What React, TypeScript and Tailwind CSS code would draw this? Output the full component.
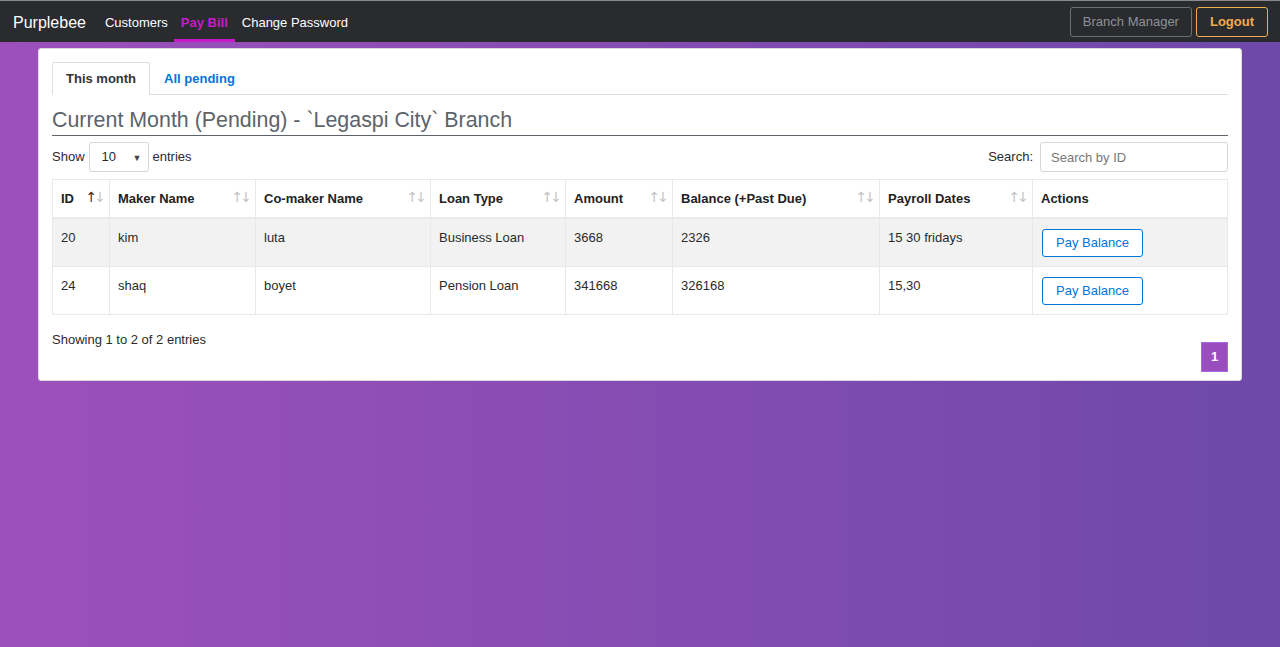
import { useState } from 'react'

const rows = [
    { id: '20', maker: 'kim', comaker: 'luta', type: 'Business Loan', amount: '3668', balance: '2326', payroll: '15 30 fridays' },
    { id: '24', maker: 'shaq', comaker: 'boyet', type: 'Pension Loan', amount: '341668', balance: '326168', payroll: '15,30' },
]

const columns = [
    { label: 'ID', width: 'w-[57px]', sort: true, active: true },
    { label: 'Maker Name', width: 'w-[146px]', sort: true },
    { label: 'Co-maker Name', width: 'w-[175px]', sort: true },
    { label: 'Loan Type', width: 'w-[135px]', sort: true },
    { label: 'Amount', width: 'w-[107px]', sort: true },
    { label: 'Balance (+Past Due)', width: 'w-[207px]', sort: true },
    { label: 'Payroll Dates', width: 'w-[153px]', sort: true },
    { label: 'Actions', width: '', sort: false },
]

const SortIcon = ({ active }: { active?: boolean }) => (
    <span className="absolute right-[6px] top-[10px] flex font-['DejaVu_Sans',sans-serif] font-normal text-[14px] leading-none tracking-[-3px]">
        <span className={active ? 'text-[#333]' : 'text-[#c4c4c4]'}>↑</span>
        <span className="text-[#c4c4c4]">↓</span>
    </span>
)

export default function App() {
    const [tab, setTab] = useState('month')

    return (
        <div className="min-h-[647px] bg-gradient-to-r from-[#9d50bb] to-[#6e48aa] font-['Liberation_Sans',Arial,sans-serif] text-[13px] text-[#292b2c]">
            {/* Navbar */}
            <nav className="h-[42px] bg-[#292b2e] border-t border-[#8a8a8a] flex items-center pl-[13px] pr-[12px]">
                <span className="text-[16px] text-white mr-[13px] pt-[2px]">Purplebee</span>
                <div className="flex h-full items-stretch">
                    <a className="px-[6px] pt-[3px] flex items-center text-white">Customers</a>
                    <a className="px-[7px] pt-[6px] flex items-center text-[#c81ac9] font-bold border-b-[3px] border-[#c81ac9]">Pay Bill</a>
                    <a className="px-[7px] pt-[3px] flex items-center text-white">Change Password</a>
                </div>
                <div className="ml-auto flex gap-[4px]">
                    <button className="h-[30px] px-[12px] border border-[#6c6f73] rounded-[3px] text-[#8e9196] text-[13px]">Branch Manager</button>
                    <button className="h-[30px] px-[13px] border border-[#f0ad4e] rounded-[3px] text-[#f0ad4e] text-[13px] font-bold">Logout</button>
                </div>
            </nav>

            <div className="px-[38px] pt-[6px]">
                <div className="bg-white rounded-[3px] border border-[#dcdcdc] px-[13px] pt-[13px] pb-[8px]">
                    {/* Tabs */}
                    <div className="flex border-b border-[#ddd] h-[33px]">
                        <button
                            onClick={() => setTab('month')}
                            className={`px-[13px] -mb-px font-bold rounded-t-[3px] ${tab === 'month' ? 'border border-[#ddd] border-b-white bg-white text-[#333]' : 'text-[#0275d8]'}`}
                        >
                            This month
                        </button>
                        <button
                            onClick={() => setTab('all')}
                            className={`px-[14px] -mb-px font-bold rounded-t-[3px] ${tab === 'all' ? 'border border-[#ddd] border-b-white bg-white text-[#333]' : 'text-[#0275d8]'}`}
                        >
                            All pending
                        </button>
                    </div>

                    <h3 className="text-[21.4px] leading-[26px] text-[#5c636b] mt-[12px] pb-[2px] border-b border-[#5c636b]">
                        Current Month (Pending) - `Legaspi City` Branch
                    </h3>

                    {/* Controls */}
                    <div className="flex items-center justify-between mt-[6px]">
                        <div className="flex items-center gap-[4px]">
                            <span>Show</span>
                            <div className="relative w-[60px] h-[30px] border border-[#d6d6d6] rounded-[3px] flex items-center pl-[12px]">
                                10
                                <span className="absolute right-[6px] top-[9px] text-[9px] text-[#444]">▼</span>
                            </div>
                            <span>entries</span>
                        </div>
                        <div className="flex items-center gap-[7px]">
                            <span>Search:</span>
                            <input
                                placeholder="Search by ID"
                                className="w-[188px] h-[30px] border border-[#d6d6d6] rounded-[3px] px-[10px] text-[13px] placeholder:text-[#777] outline-none"
                            />
                        </div>
                    </div>

                    {/* Table */}
                    <table className="w-full mt-[7px] border-collapse border border-[#e9e9e9] table-fixed">
                        <thead>
                            <tr className="h-[38px] border-b-2 border-[#e9e9e9]">
                                {columns.map((c) => (
                                    <th key={c.label} className={`${c.width} relative border-r border-[#e9e9e9] text-left font-bold px-[8px] text-[#222]`}>
                                        {c.label}
                                        {c.sort && <SortIcon active={c.active} />}
                                    </th>
                                ))}
                            </tr>
                        </thead>
                        <tbody>
                            {rows.map((r, i) => (
                                <tr key={r.id} className={`${i === 0 ? 'bg-[#f2f2f2] h-[49px]' : 'bg-white h-[48px]'} border-t border-[#e9e9e9] align-top`}>
                                    {[r.id, r.maker, r.comaker, r.type, r.amount, r.balance, r.payroll].map((v, j) => (
                                        <td key={j} className="border-r border-[#e9e9e9] px-[8px] pt-[11px] leading-[16px]">{v}</td>
                                    ))}
                                    <td className="px-[9px] pt-[10px]">
                                        <button className="h-[28px] px-[13px] border border-[#0275d8] rounded-[3px] text-[#0275d8] text-[13px] bg-white">Pay Balance</button>
                                    </td>
                                </tr>
                            ))}
                        </tbody>
                    </table>

                    <div className="flex justify-between mt-[14px]">
                        <span className="mt-[1px]">Showing 1 to 2 of 2 entries</span>
                        <span className="mt-[13px] w-[27px] h-[30px] flex items-center justify-center bg-[#9a4dbf] border border-[#a56ae0] text-white font-bold">1</span>
                    </div>
                </div>
            </div>
        </div>
    )
}
